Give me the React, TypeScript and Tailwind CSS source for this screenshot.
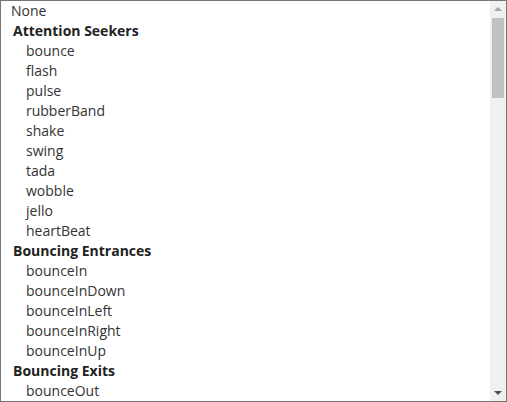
import React from 'react';

type Group = { label: string; items: string[] };

const groups: Group[] = [
  {
    label: 'Attention Seekers',
    items: ['bounce', 'flash', 'pulse', 'rubberBand', 'shake', 'swing', 'tada', 'wobble', 'jello', 'heartBeat'],
  },
  {
    label: 'Bouncing Entrances',
    items: ['bounceIn', 'bounceInDown', 'bounceInLeft', 'bounceInRight', 'bounceInUp'],
  },
  {
    label: 'Bouncing Exits',
    items: ['bounceOut'],
  },
];

const App: React.FC = () => {
  return (
    <div className="w-[507px] h-[402px] bg-white">
      <div className="w-full h-full border border-[#767676] flex overflow-hidden font-['Open_Sans',sans-serif] text-[14px] leading-[20px] text-[#333]">
        {/* List */}
        <div className="flex-1 overflow-hidden">
          <div className="pl-[10px]">None</div>
          {groups.map((g) => (
            <div key={g.label}>
              <div className="pl-3 font-bold text-[#222]">{g.label}</div>
              {g.items.map((item) => (
                <div key={item} className="pl-[25px]">
                  {item}
                </div>
              ))}
            </div>
          ))}
        </div>

        {/* Scrollbar */}
        <div className="w-[16px] bg-[#f0f0f0] flex flex-col items-center">
          <div className="h-[16px] flex items-center justify-center">
            <div className="w-0 h-0 border-x-[4px] border-x-transparent border-b-[4px] border-b-[#a3a3a3]" />
          </div>
          <div className="w-[12px] h-[80px] mt-[1px] bg-[#c1c1c1]" />
          <div className="flex-1" />
          <div className="h-[16px] flex items-center justify-center">
            <div className="w-0 h-0 border-x-[4px] border-x-transparent border-t-[4px] border-t-[#505050]" />
          </div>
        </div>
      </div>
    </div>
  );
};

export default App;
